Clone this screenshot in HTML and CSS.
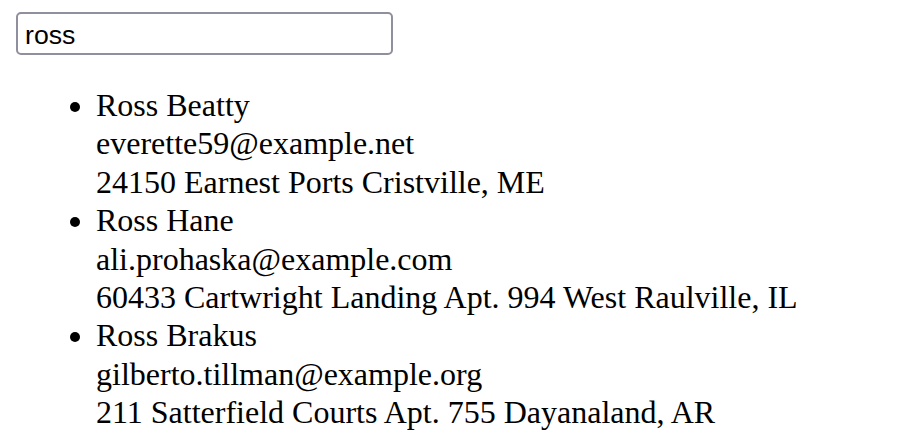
FILE: index.html
```html
<!DOCTYPE html>
<html>
<head>
<meta charset="utf-8">
<link rel="stylesheet" href="styles.css">
</head>
<body>
<div class="page">
  <div class="search-row">
    <input class="search" type="text" value="ross">
  </div>
  <ul class="results">
    <li>Ross Beatty<br>everette59@example.net<br>24150 Earnest Ports Cristville, ME</li>
    <li>Ross Hane<br>ali.prohaska@example.com<br>60433 Cartwright Landing Apt. 994 West Raulville, IL</li>
    <li>Ross Brakus<br>gilberto.tillman@example.org<br>211 Satterfield Courts Apt. 755 Dayanaland, AR</li>
  </ul>
</div>
</body>
</html>
```
FILE: styles.css
```css
html, body {
  margin: 0;
  padding: 0;
  background: #ffffff;
}
.page {
  padding: 12px 16px 0 16px;
  font-family: "Liberation Serif", "Times New Roman", serif;
  font-size: 32px;
  line-height: 38.4px;
  color: #000000;
}
.search-row {
  display: flex;
}
.search {
  box-sizing: border-box;
  width: 377px;
  height: 43px;
  margin: 0;
  padding: 4px 6px 0 7px;
  border: 2px solid #8f8f9d;
  border-radius: 5px;
  font-family: "Liberation Sans", Arial, sans-serif;
  font-size: 26.67px;
  color: #000000;
  background: #ffffff;
  outline: none;
}
.results {
  margin: 31px 0 0 0;
  padding: 0 0 0 80px;
  list-style: disc;
}
```
